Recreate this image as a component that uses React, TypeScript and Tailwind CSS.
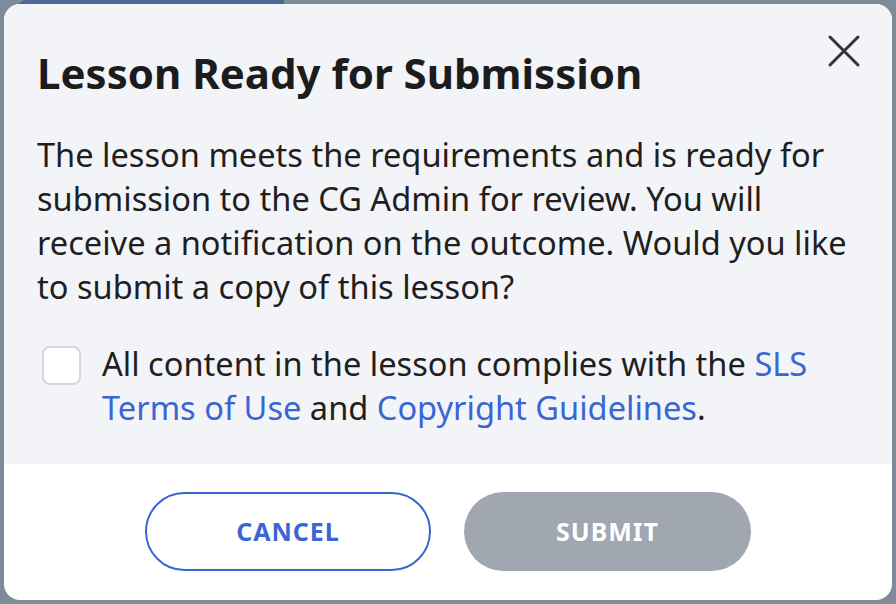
import React from "react";

export default function App() {
  return (
    <div
      className="relative w-[896px] h-[604px] bg-[#808b9a] overflow-hidden p-[4px]"
      style={{ fontFamily: '"Noto Sans", "Open Sans", sans-serif' }}
    >
      <div className="absolute left-[18px] top-0 w-[266px] h-[8px] rounded-tl-[8px] bg-[#4d6799]" />
      <div className="relative flex flex-col w-[888px] h-[596px] rounded-[16px] overflow-hidden bg-white">
        <div className="relative bg-[#f3f4f8] px-[33px] pt-[47px] pb-[34px]">
          <button className="absolute right-[28px] top-[27px] w-[40px] h-[40px] flex items-center justify-center">
            <svg width="34" height="34" viewBox="0 0 34 34" fill="none">
              <path d="M3 3 L31 31 M31 3 L3 31" stroke="#333333" strokeWidth="3" strokeLinecap="round" />
            </svg>
          </button>
          <h1 className="text-[42px] leading-[44px] font-bold text-[#1c1c1c]">
            Lesson Ready for Submission
          </h1>
          <p className="mt-[38px] text-[32.6px] leading-[44px] text-[#1f1f1f]">
            The lesson meets the requirements and is ready for submission to the CG Admin for review. You will receive a notification on the outcome. Would you like to submit a copy of this lesson?
          </p>
          <div className="mt-[33px] flex items-start">
            <div className="ml-[5px] mt-[4px] w-[39px] h-[39px] shrink-0 rounded-[8px] border-2 border-[#d3d6db] bg-white" />
            <p className="ml-[21px] text-[32.6px] leading-[44px] text-[#1f1f1f]">
              All content in the lesson complies with the{" "}
              <span className="text-[#3a66d4]">SLS Terms of Use</span> and{" "}
              <span className="text-[#3a66d4]">Copyright Guidelines</span>.
            </p>
          </div>
        </div>
        <div className="flex-1 flex items-start justify-center gap-[33px] pt-[28px]">
          <button className="w-[286px] h-[79px] rounded-full border-2 border-[#3a66d4] bg-white text-[#3a66d4] text-[25px] font-bold tracking-[1px]">
            CANCEL
          </button>
          <button className="w-[287px] h-[79px] rounded-full bg-[#a0a7b0] text-white text-[25px] font-bold tracking-[1px]">
            SUBMIT
          </button>
        </div>
      </div>
    </div>
  );
}
